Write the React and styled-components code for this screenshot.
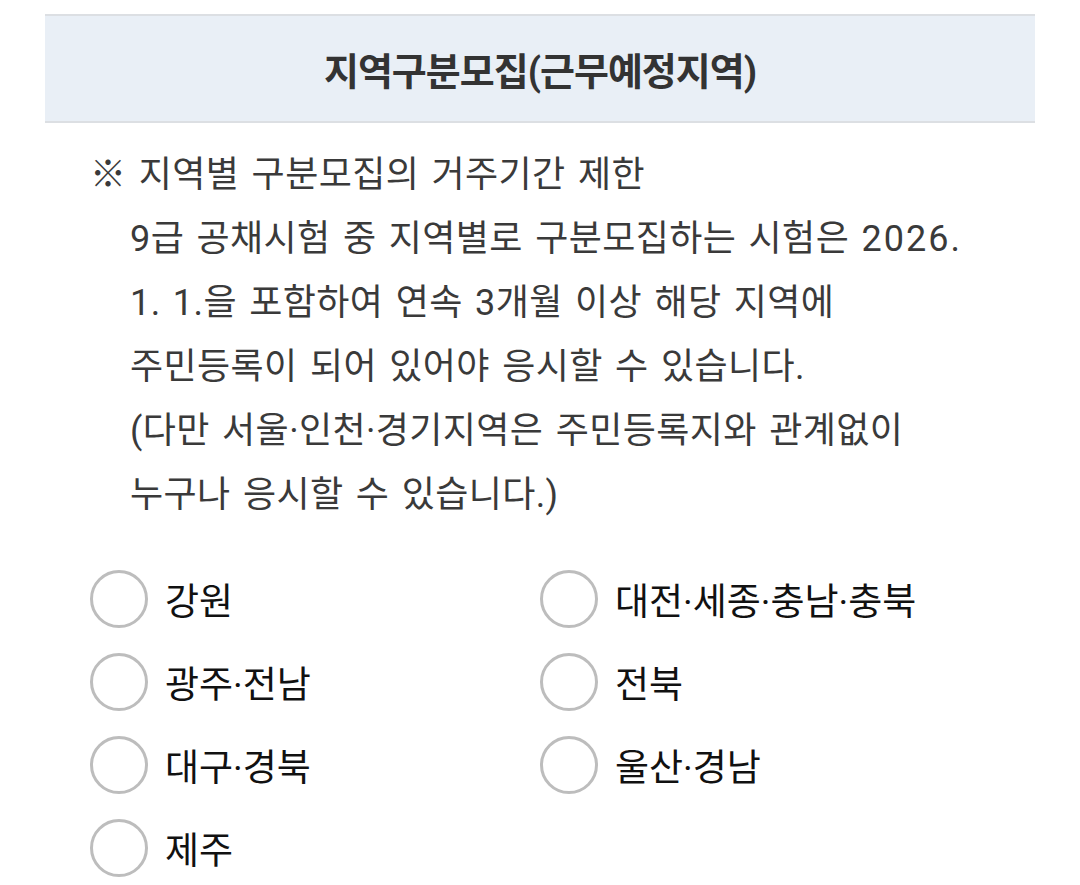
import React from "react";
import styled, { createGlobalStyle } from "styled-components";

const Global = createGlobalStyle`
  html, body { margin: 0; padding: 0; background: #fff; }
  body { font-family: Roboto, "Noto Sans CJK KR", sans-serif; }
`;

const Page = styled.div`
  padding: 14px 45px 0 45px;
  width: 990px;
`;

const Header = styled.div`
  height: 105px;
  background: #e9eff6;
  border-top: 2px solid #dcdfe3;
  border-bottom: 2px solid #dcdfe3;
  display: flex;
  align-items: center;
  justify-content: center;
`;

const Title = styled.h2`
  margin: 0;
  font-family: Roboto, "Noto Sans CJK KR", sans-serif;
  font-size: 38px;
  font-weight: 700;
  color: #333;
  letter-spacing: -1px;
`;

const Notice = styled.div`
  margin-top: 20px;
  padding-left: 45px;
  font-size: 36px;
  line-height: 64px;
  color: #3a3a3a;
  word-spacing: 3px;
  letter-spacing: 0.4px;
`;

const Line = styled.div`
  white-space: nowrap;
  padding-left: ${(p) => (p.$indent ? "40px" : "0")};
`;

const Digits = styled.span`
  letter-spacing: 2px;
`;

const Options = styled.div`
  margin-top: 30px;
  padding-left: 45px;
  display: grid;
  grid-template-columns: 450px 450px;
  grid-auto-rows: 83px;
`;

const Option = styled.label`
  display: flex;
  align-items: center;
  gap: 17px;
  cursor: pointer;
`;

const Circle = styled.span`
  box-sizing: border-box;
  width: 58px;
  height: 58px;
  border-radius: 50%;
  border: 3px solid #bdbdbd;
  background: #fff;
  flex: none;
`;

const Label = styled.span`
  font-size: 37px;
  color: #111;
`;

const regions = [
  "강원",
  "대전·세종·충남·충북",
  "광주·전남",
  "전북",
  "대구·경북",
  "울산·경남",
  "제주",
];

export default function App() {
  return (
    <>
      <Global />
      <Page>
        <Header>
          <Title>지역구분모집(근무예정지역)</Title>
        </Header>
        <Notice>
          <Line>※ 지역별 구분모집의 거주기간 제한</Line>
          <Line $indent>
            9급 공채시험 중 지역별로 구분모집하는 시험은 <Digits>2026</Digits>.
          </Line>
          <Line $indent>1. 1.을 포함하여 연속 3개월 이상 해당 지역에</Line>
          <Line $indent>주민등록이 되어 있어야 응시할 수 있습니다.</Line>
          <Line $indent>(다만 서울·인천·경기지역은 주민등록지와 관계없이</Line>
          <Line $indent>누구나 응시할 수 있습니다.)</Line>
        </Notice>
        <Options>
          {regions.map((r) => (
            <Option key={r}>
              <Circle />
              <Label>{r}</Label>
            </Option>
          ))}
        </Options>
      </Page>
    </>
  );
}
